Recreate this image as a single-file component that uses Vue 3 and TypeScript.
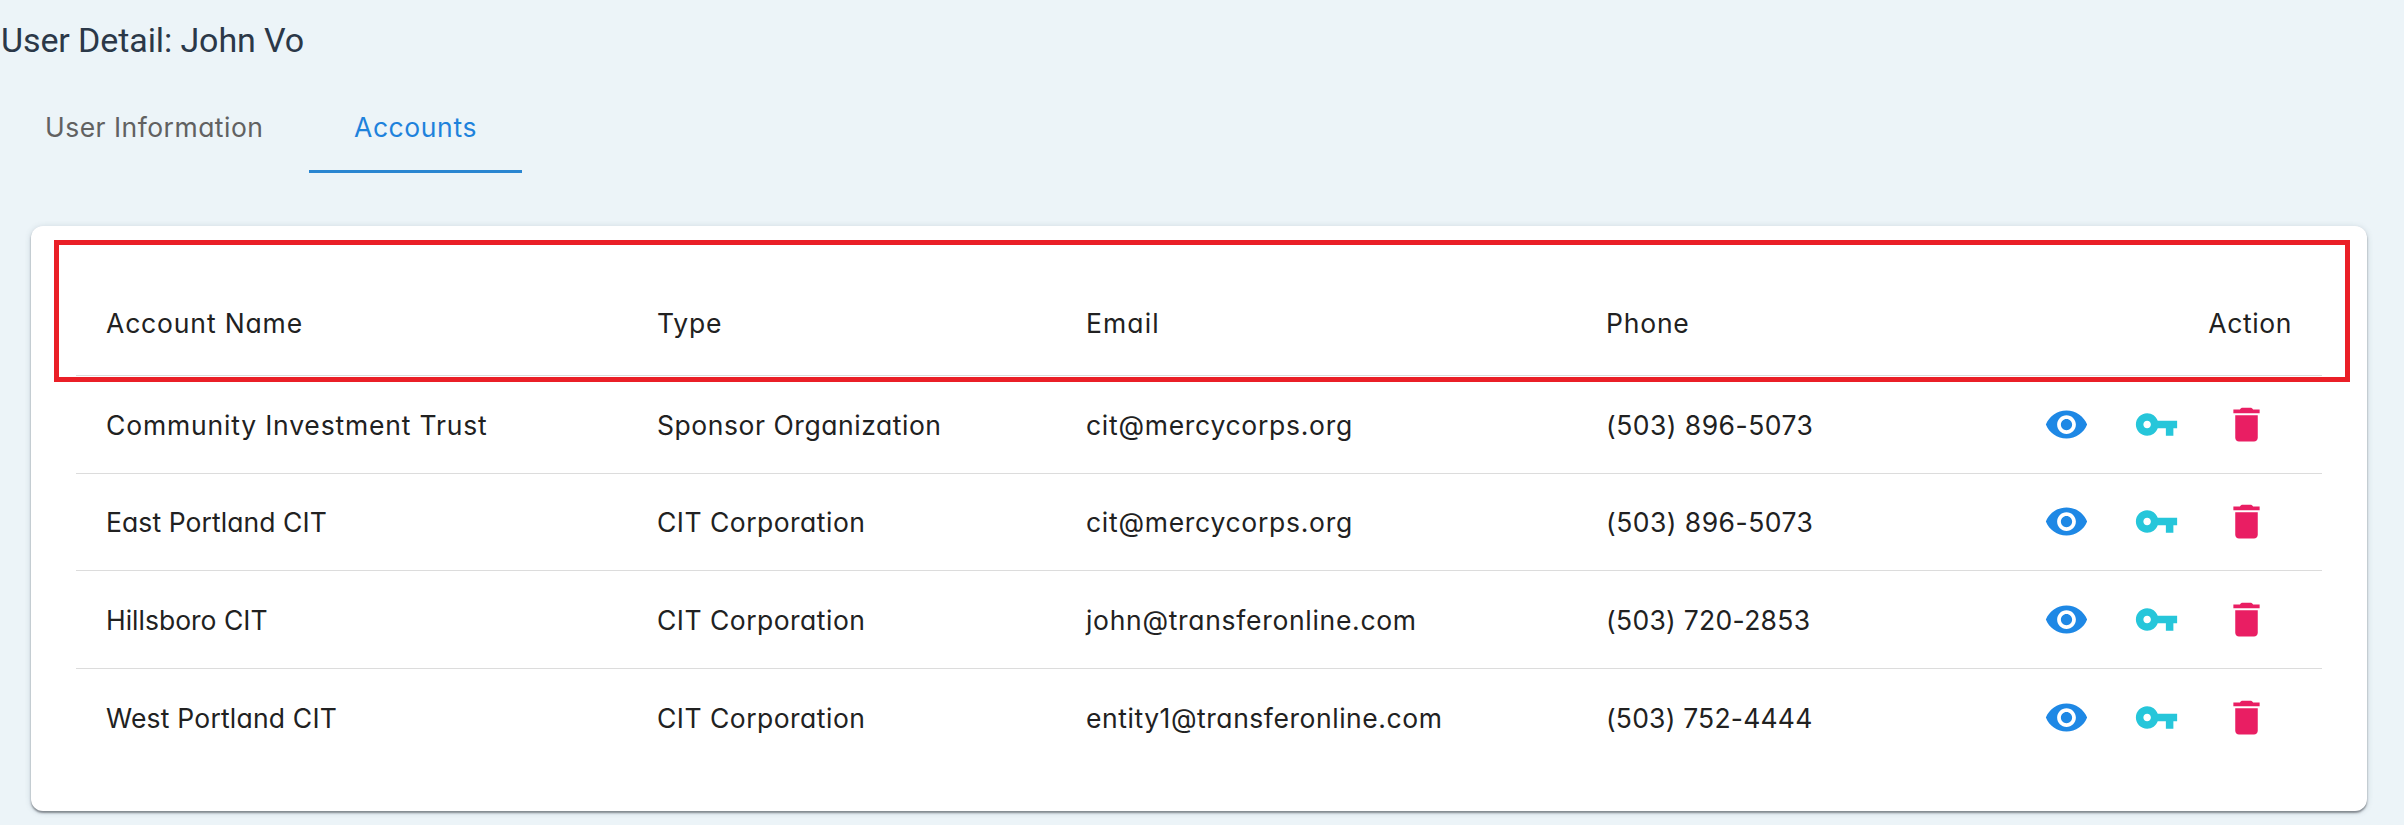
<script setup lang="ts">
import { ref } from 'vue'

interface Label {
  text: string
  /** letter spacing in px */
  spacing: number
}

const label = (text: string, spacing: number): Label => ({ text, spacing })

const tabs: Label[] = [label('User Information', 0.48), label('Accounts', 0.6)]
const activeTab = ref(1)

const columns: Label[] = [
  label('Account Name', 0.85),
  label('Type', 0.8),
  label('Email', 1.1),
  label('Phone', 0.8),
  label('Action', 0.6),
]

const accounts: Label[][] = [
  [
    label('Community Investment Trust', 0.82),
    label('Sponsor Organization', 0.55),
    label('cit@mercycorps.org', 0.72),
    label('(503) 896-5073', 0.47),
  ],
  [
    label('East Portland CIT', 0.08),
    label('CIT Corporation', 0.48),
    label('cit@mercycorps.org', 0.72),
    label('(503) 896-5073', 0.47),
  ],
  [
    label('Hillsboro CIT', 0),
    label('CIT Corporation', 0.48),
    label('john@transferonline.com', 0.7),
    label('(503) 720-2853', 0.3),
  ],
  [
    label('West Portland CIT', 0.2),
    label('CIT Corporation', 0.48),
    label('entity1@transferonline.com', 0.55),
    label('(503) 752-4444', 0.2),
  ],
]
</script>

<template>
  <main class="page">
    <h1 class="title">User Detail: John Vo</h1>

    <nav class="tabs">
      <button
        v-for="(tab, i) in tabs"
        :key="tab.text"
        class="tab"
        :class="{ active: i === activeTab }"
        @click="activeTab = i"
      >
        <span :style="{ letterSpacing: tab.spacing + 'px' }">{{ tab.text }}</span>
      </button>
    </nav>

    <section class="card">
      <div class="row head">
        <div v-for="col in columns" :key="col.text" class="cell">
          <span :style="{ letterSpacing: col.spacing + 'px' }">{{ col.text }}</span>
        </div>
      </div>
      <div v-for="(account, r) in accounts" :key="r" class="row">
        <div v-for="(field, c) in account" :key="c" class="cell">
          <span :style="{ letterSpacing: field.spacing + 'px' }">{{ field.text }}</span>
        </div>
        <div class="actions">
          <svg class="icon view" viewBox="0 0 24 24">
            <path d="M12 4.5C7 4.5 2.73 7.61 1 12c1.73 4.39 6 7.5 11 7.5s9.27-3.11 11-7.5c-1.73-4.39-6-7.5-11-7.5zM12 17c-2.76 0-5-2.24-5-5s2.24-5 5-5 5 2.24 5 5-2.24 5-5 5zm0-8c-1.66 0-3 1.34-3 3s1.34 3 3 3 3-1.34 3-3-1.34-3-3-3z" />
          </svg>
          <svg class="icon key" viewBox="0 0 24 24">
            <path d="M12.65 10C11.83 7.67 9.61 6 7 6c-3.31 0-6 2.69-6 6s2.69 6 6 6c2.61 0 4.83-1.67 5.65-4H17v4h4v-4h2v-4H12.65zM7 14c-1.1 0-2-.9-2-2s.9-2 2-2 2 .9 2 2-.9 2-2 2z" />
          </svg>
          <svg class="icon remove" viewBox="0 0 24 24">
            <path d="M6 19c0 1.1.9 2 2 2h8c1.1 0 2-.9 2-2V7H6v12zM19 4h-3.5c-.3-.65-.8-1-1.5-1h-4c-.7 0-1.2.35-1.5 1H5v2h14V4z" />
          </svg>
        </div>
      </div>
      <div class="highlight"></div>
    </section>
  </main>
</template>

<style>
body {
  background: #ecf4f8;
}
</style>

<style scoped>
.page {
  box-sizing: border-box;
  height: 825px;
  overflow: hidden;
  background: #ecf4f8;
  font-family: Inter, 'Open Sans', sans-serif;
  font-feature-settings: 'cv11';
  font-size: 26.5px;
  font-weight: 370;
  color: #212121;
}

.title {
  margin: 0;
  padding-left: 1px;
  height: 80px;
  line-height: 80px;
  font-family: Roboto, sans-serif;
  font-size: 34px;
  font-weight: 400;
  letter-spacing: -0.1px;
  color: #2b3848;
}

.tabs {
  display: flex;
  height: 93px;
}

.tab {
  box-sizing: border-box;
  display: flex;
  align-items: center;
  padding: 4px 45px 0;
  border: 0;
  border-bottom: 3px solid transparent;
  background: none;
  font: inherit;
  font-feature-settings: inherit;
  color: #616161;
  width: 309px;
  white-space: nowrap;
}

.tab.active {
  width: 213px;
  border-bottom-color: #2a86d1;
  color: #1e82dc;
}

.card {
  position: relative;
  box-sizing: border-box;
  margin: 53px 37px 0 31px;
  height: 585px;
  padding: 44px 45px 0;
  border-radius: 12px;
  background: #fff;
  box-shadow:
    0 2px 2px rgba(60, 66, 72, 0.55),
    0 1px 6px rgba(60, 80, 100, 0.2);
}

.row {
  box-sizing: border-box;
  display: grid;
  grid-template-columns: 551px 429px 520px 467px 1fr;
  align-items: center;
  height: 97.67px;
  border-bottom: 1px solid #dcdcdc;
}

.row.head {
  grid-template-columns: 551px 429px 520px 1fr auto;
  height: 106px;
}

.row:nth-last-child(2) {
  border-bottom-color: transparent;
}

.cell {
  padding: 1px 30px 0;
  line-height: 32px;
  white-space: nowrap;
}

.actions {
  display: flex;
  justify-content: flex-end;
  gap: 45px;
  padding-right: 53px;
}

.icon {
  display: block;
  flex: none;
  width: 45px;
  height: 45px;
}

.view {
  fill: #1e88e5;
}

.key {
  fill: #26c6da;
}

.remove {
  fill: #e91e63;
}

.highlight {
  position: absolute;
  box-sizing: border-box;
  top: 14px;
  left: 23px;
  width: 2296px;
  height: 142px;
  border: 5px solid #ea1f27;
  pointer-events: none;
}
</style>
